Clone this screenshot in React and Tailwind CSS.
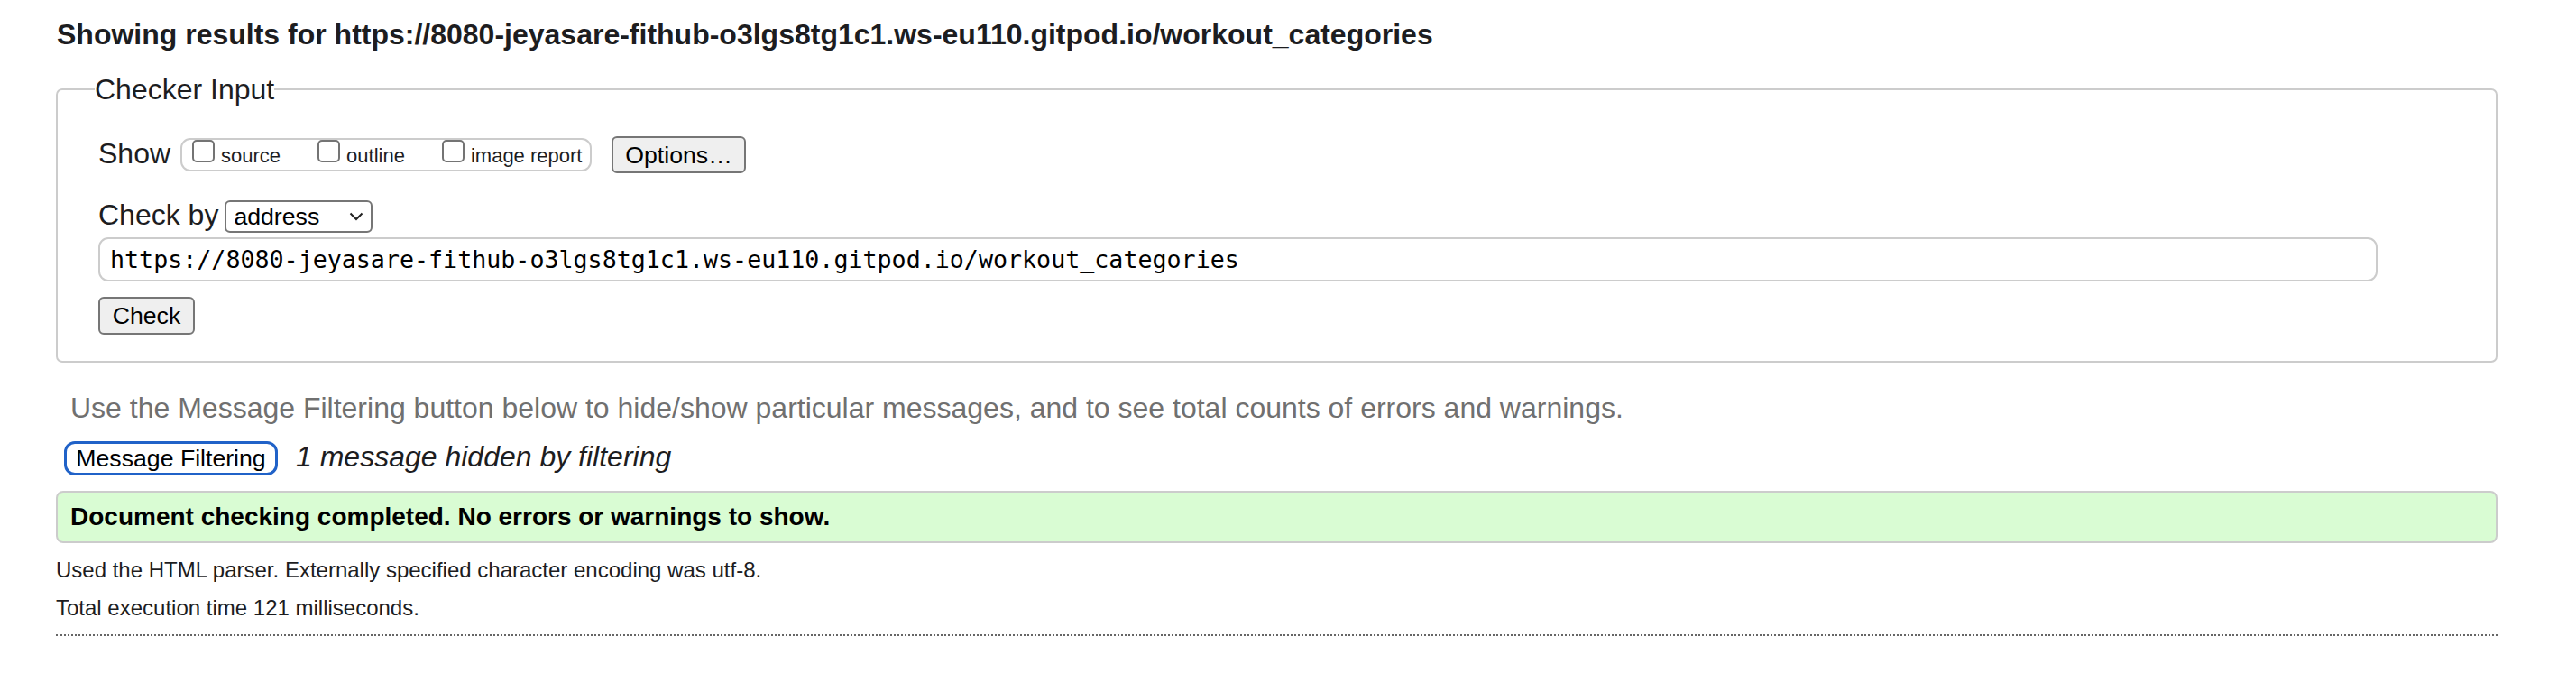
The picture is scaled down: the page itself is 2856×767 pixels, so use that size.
const CheckBox = ({ label }) => (
  <div className="flex items-start">
    <span className="w-[25px] h-[25px] border-2 border-[#747474] rounded-[5px] bg-white"></span>
    <span className="ml-[7px] mt-[5px] text-[22px] leading-[25px] text-[#1d1d1f]">{label}</span>
  </div>
);

const App = () => {
  return (
    <div className="min-h-screen bg-white pt-[20px] pl-[62px] pr-[87px] font-['Liberation_Sans',Arial,sans-serif] text-black">
      <h2 className="ml-[1px] text-[32px] leading-[36px] font-bold text-[#1d1d1f]">
        Showing results for https://8080-jeyasare-fithub-o3lgs8tg1c1.ws-eu110.gitpod.io/workout_categories
      </h2>

      {/* Checker input */}
      <fieldset className="mt-[25px] border-2 border-[#cccccc] rounded-[7px] pl-[45px] pr-[45px] pt-[34px] pb-[29px]">
        <legend className="ml-[-4px] text-[32px] leading-[36px] text-[#1d1d1f]">Checker Input</legend>

        <div className="flex items-center h-[41px]">
          <span className="text-[32px] leading-[36px] mb-[4px] text-[#1d1d1f]">Show</span>
          <div className="ml-[11px] flex items-start gap-[41px] h-[37px] w-[456px] border-2 border-[#cccccc] rounded-[11px] pl-[11px]">
            <CheckBox label="source" />
            <CheckBox label="outline" />
            <CheckBox label="image report" />
          </div>
          <button className="ml-[22px] h-[41px] w-[149px] bg-[#efefef] border-2 border-[#767676] rounded-[6px] text-[26.67px] leading-[30px] text-black">
            Options…
          </button>
        </div>

        <div className="mt-[30px] flex items-center h-[36px]">
          <span className="text-[32px] leading-[36px] mb-[4px] text-[#1d1d1f]">Check by</span>
          <div className="ml-[7px] flex items-center justify-between h-[36px] w-[164px] border-2 border-[#767676] rounded-[6px] bg-white pl-[8px] pr-[8px]">
            <span className="text-[26.67px] leading-[30px] text-black">address</span>
            <svg width="16" height="10" viewBox="0 0 16 10" fill="none">
              <path d="M1.5 1.5 L8 8 L14.5 1.5" stroke="#222" strokeWidth="2" />
            </svg>
          </div>
        </div>

        <div className="mt-[5px] flex items-center h-[49px] w-[2527px] border-2 border-[#cccccc] rounded-[11px] pl-[11px]">
          <span className="font-['DejaVu_Sans_Mono',monospace] text-[26.67px] leading-[30px] text-black">
            https://8080-jeyasare-fithub-o3lgs8tg1c1.ws-eu110.gitpod.io/workout_categories
          </span>
        </div>

        <button className="mt-[17px] block h-[42px] w-[107px] bg-[#efefef] border-2 border-[#767676] rounded-[6px] text-[26.67px] leading-[30px] text-black">
          Check
        </button>
      </fieldset>

      <p className="mt-[32px] pl-[16px] text-[32px] leading-[36px] text-[#707070]">
        Use the Message Filtering button below to hide/show particular messages, and to see total counts of errors and warnings.
      </p>

      <div className="mt-[19px] ml-[9px] flex items-center h-[38px]">
        <button className="h-[38px] w-[237px] border-[3px] border-[#2062c8] rounded-[12px] bg-white text-[26.67px] leading-[30px] text-black">
          Message Filtering
        </button>
        <span className="ml-[20px] mb-[4px] text-[32px] leading-[36px] italic text-[#1d1d1f]">1 message hidden by filtering</span>
      </div>

      <div className="mt-[17px] flex items-center h-[58px] border-2 border-[#cccccc] rounded-[8px] bg-[#d9fcd3] pl-[14px]">
        <span className="text-[28px] leading-[32px] font-bold text-black">
          Document checking completed. No errors or warnings to show.
        </span>
      </div>

      <p className="mt-[16px] text-[24px] leading-[28px] text-[#1d1d1f]">
        Used the HTML parser. Externally specified character encoding was utf-8.
      </p>
      <p className="mt-[14px] text-[24px] leading-[28px] text-[#1d1d1f]">Total execution time 121 milliseconds.</p>

      <div className="mt-[15px] border-t-2 border-dotted border-[#666666]"></div>
    </div>
  );
};

export default App;
